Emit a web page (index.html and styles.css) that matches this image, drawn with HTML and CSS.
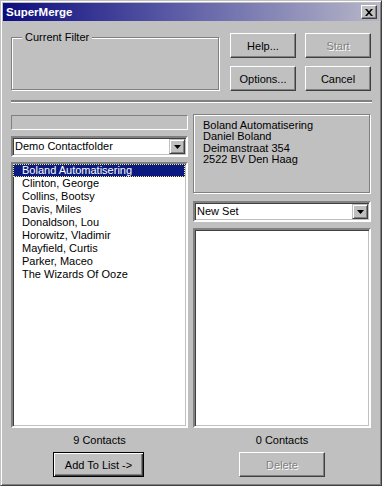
FILE: index.html
```html
<!DOCTYPE html>
<html lang="en">
<head>
    <meta charset="UTF-8">
    <title>SuperMerge</title>
    <link rel="stylesheet" href="styles.css">
</head>
<body>
    <div class="window">
        <div class="titlebar">
            <span class="title">SuperMerge</span>
            <button class="close-btn">
                <svg width="8" height="7" viewBox="0 0 8 7"><path d="M0 0h2l2 2.3L6 0h2L5 3.5 8 7H6L4 4.7 2 7H0l3-3.5z" fill="#000"/></svg>
            </button>
        </div>
        <div class="client">
            <div class="top-row">
                <fieldset class="groupbox">
                    <legend>Current Filter</legend>
                </fieldset>
                <div class="button-grid">
                    <button class="btn">Help...</button>
                    <button class="btn" disabled>Start</button>
                    <button class="btn">Options...</button>
                    <button class="btn">Cancel</button>
                </div>
            </div>
            <div class="separator"></div>
            <div class="columns">
                <div class="col col-left">
                    <div class="status-box"></div>
                    <div class="combo">
                        <span class="combo-text">Demo Contactfolder</span>
                        <span class="combo-btn"><svg width="7" height="4" viewBox="0 0 7 4"><path d="M0 0h7L3.5 4z" fill="#000"/></svg></span>
                    </div>
                    <ul class="listbox">
                        <li class="selected">Boland Automatisering</li>
                        <li>Clinton, George</li>
                        <li>Collins, Bootsy</li>
                        <li>Davis, Miles</li>
                        <li>Donaldson, Lou</li>
                        <li>Horowitz, Vladimir</li>
                        <li>Mayfield, Curtis</li>
                        <li>Parker, Maceo</li>
                        <li>The Wizards Of Ooze</li>
                    </ul>
                    <div class="count">9 Contacts</div>
                    <button class="btn btn-default btn-add">Add To List -&gt;</button>
                </div>
                <div class="col col-right">
                    <div class="address">
                        Boland Automatisering<br>
                        Daniel Boland<br>
                        Deimanstraat 354<br>
                        2522 BV Den Haag
                    </div>
                    <div class="combo">
                        <span class="combo-text">New Set</span>
                        <span class="combo-btn"><svg width="7" height="4" viewBox="0 0 7 4"><path d="M0 0h7L3.5 4z" fill="#000"/></svg></span>
                    </div>
                    <ul class="listbox listbox-right"></ul>
                    <div class="count">0 Contacts</div>
                    <button class="btn btn-delete" disabled>Delete</button>
                </div>
            </div>
        </div>
    </div>
</body>
</html>
```

FILE: styles.css
```css
body {
    margin: 0;
    padding: 0;
    background-color: #c0c0c0;
    font-family: "Liberation Sans", Arial, sans-serif;
    font-size: 11px;
    line-height: 13px;
    color: #000;
}

.window {
    width: 382px;
    height: 486px;
    box-sizing: border-box;
    display: flex;
    flex-direction: column;
    padding: 2px;
    background-color: #c0c0c0;
    border: 1px solid;
    border-color: #c0c0c0 #404040 #404040 #c0c0c0;
    box-shadow: inset 1px 1px 0 #fff, inset -1px -1px 0 #808080;
}

.titlebar {
    height: 18px;
    display: flex;
    align-items: center;
    justify-content: space-between;
    padding: 0 2px 0 3px;
    background: linear-gradient(to right, #0c0c7e, #5a5aa6 45%, #b6b6c8);
}

.title {
    color: #fff;
    font-weight: bold;
    font-size: 11.5px;
}

.close-btn {
    width: 16px;
    height: 14px;
    padding: 0;
    display: flex;
    align-items: center;
    justify-content: center;
    background-color: #c0c0c0;
    border: 1px solid;
    border-color: #fff #404040 #404040 #fff;
    box-shadow: inset -1px -1px 0 #808080;
}

.client {
    flex: 1;
    display: flex;
    flex-direction: column;
    padding: 10px 7px 6px 8px;
}

.top-row {
    display: flex;
    align-items: flex-start;
    gap: 11px;
}

.groupbox {
    width: 208px;
    height: 59px;
    box-sizing: border-box;
    margin: 0;
    padding: 0 0 0 10px;
    min-width: 0;
    border: 1px solid #808080;
    box-shadow: inset 1px 1px 0 #fff, 1px 1px 0 #fff;
}

.groupbox legend {
    padding: 0 3px;
    background-color: #c0c0c0;
    line-height: 13px;
}

.button-grid {
    display: grid;
    grid-template-columns: 66px 66px;
    grid-auto-rows: 25px;
    gap: 8px 9px;
    margin-top: 2px;
}

.btn {
    font-family: "Liberation Sans", Arial, sans-serif;
    font-size: 11px;
    color: #000;
    padding: 0;
    height: 25px;
    background-color: #c0c0c0;
    border: 1px solid;
    border-color: #fff #404040 #404040 #fff;
    box-shadow: inset -1px -1px 0 #808080;
}

.btn:disabled {
    color: #808080;
    text-shadow: 1px 1px 0 #fff;
}

.btn-default {
    border: 1px solid #000;
    box-shadow: inset 1px 1px 0 #fff, inset -1px -1px 0 #404040, inset -2px -2px 0 #808080;
}

.separator {
    margin-top: 9px;
    border-top: 2px solid #808080;
    border-bottom: 1px solid #fff;
}

.columns {
    flex: 1;
    display: flex;
    gap: 5px;
    margin-top: 11px;
}

.col {
    display: flex;
    flex-direction: column;
}

.col-left {
    width: 177px;
}

.col-right {
    width: 178px;
}

.status-box {
    height: 15px;
    box-sizing: border-box;
    margin: 1px 0 6px;
    border: 1px solid;
    border-color: #808080 #fff #fff #808080;
}

.combo {
    height: 21px;
    box-sizing: border-box;
    display: flex;
    background-color: #fff;
    border: 2px solid;
    border-color: #808080 #fff #fff #808080;
    box-shadow: inset 1px 1px 0 #404040, inset -1px -1px 0 #c0c0c0;
    padding: 1px 1px 1px 1px;
    margin-bottom: 5px;
}

.combo-text {
    flex: 1;
    padding-left: 1px;
    line-height: 15px;
}

.combo-btn {
    width: 16px;
    height: 15px;
    box-sizing: border-box;
    display: flex;
    align-items: center;
    justify-content: center;
    background-color: #c0c0c0;
    border: 1px solid;
    border-color: #c0c0c0 #404040 #404040 #c0c0c0;
    box-shadow: inset 1px 1px 0 #fff, inset -1px -1px 0 #808080;
}

.listbox {
    flex: 1;
    margin: 0;
    padding: 0;
    list-style: none;
    background-color: #fff;
    border: 2px solid;
    border-color: #808080 #fff #fff #808080;
    box-shadow: inset 1px 1px 0 #404040, inset -1px -1px 0 #c0c0c0;
}

.listbox li {
    height: 13px;
    box-sizing: border-box;
    padding-left: 9px;
    white-space: nowrap;
}

.listbox li.selected {
    margin: 0 1px 0 0;
    padding-left: 8px;
    line-height: 11px;
    background-color: #0a1a80;
    color: #fff;
    border: 1px dotted #f0f070;
}

.address {
    height: 79px;
    box-sizing: border-box;
    width: 177px;
    padding: 5px 0 0 9px;
    line-height: 11.4px;
    border: 1px solid #808080;
    box-shadow: inset 1px 1px 0 #fff, 1px 1px 0 #fff;
    margin-bottom: 8px;
}

.col-right .combo {
    margin-bottom: 6px;
}

.count {
    margin: 6px 0 5px;
    text-align: center;
}

.btn-add {
    align-self: center;
    width: 91px;
    margin-right: 2px;
}

.btn-delete {
    align-self: center;
    width: 86px;
}
```
